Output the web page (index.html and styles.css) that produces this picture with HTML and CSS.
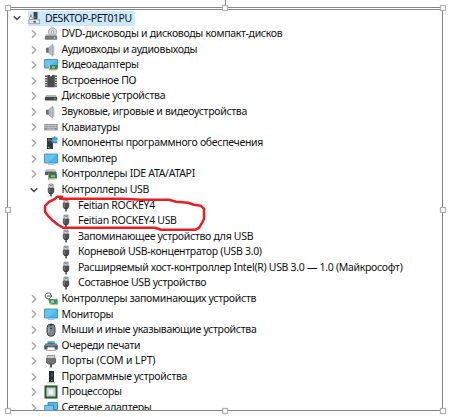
FILE: index.html
```html
<!DOCTYPE html>
<html lang="ru">
<head>
<meta charset="utf-8">
<title>Диспетчер устройств</title>
<link rel="stylesheet" href="styles.css">
</head>
<body>
<svg class="defs" width="0" height="0">
  <symbol id="closed" viewBox="0 0 8 10"><path d="M2 1.3 5.7 5 2 8.7" fill="none" stroke="#a2a2a2" stroke-width="1.3"/></symbol>
  <symbol id="open" viewBox="0 0 8 10"><path d="M.7 3.2 4 6.5 7.3 3.2" fill="none" stroke="#404040" stroke-width="1.4"/></symbol>
  <symbol id="pc" viewBox="0 0 14 14"><path d="M5.5 1h4v7h-4z" fill="#3f4548"/><path d="M6.5 6.3h1" stroke="#6be091"/><path d="M2.5 3.5h1v3h-1z" fill="#555"/><path d="M1.5 6h2.6v3H1.5z" fill="#fff" stroke="#777" stroke-width=".6"/><path d="M1 8.7h10.5v4H1z" fill="#e6e8e9" stroke="#8b8f92" stroke-width=".8"/><path d="M5.5 10.8h2.3" stroke="#333" stroke-width="1.4"/></symbol>
  <symbol id="dvd" viewBox="0 0 14 14"><circle cx="8.5" cy="5" r="4.2" fill="#d5d5d5" stroke="#999" stroke-width=".7"/><circle cx="8.5" cy="5" r="1.2" fill="#fff" stroke="#888" stroke-width=".6"/><path d="m2 7.5-1.2 2h12.4L12 7.5z" fill="#aaa"/><rect x=".8" y="9" width="12.4" height="3.7" rx=".7" fill="#777"/><path d="M9.5 11h2" stroke="#d5ded6"/></symbol>
  <symbol id="audio" viewBox="0 0 14 14"><path d="M2 4.7h3v5H2z" fill="#69727a"/><path d="m4.7 4.7 4-3.5v12l-4-3.5z" fill="#b5bbc0" stroke="#858c92" stroke-width=".6"/><path d="M9.8 2.5v9.5" stroke="#a4aaaf" stroke-width="1"/></symbol>
  <symbol id="screen" viewBox="0 0 14 14"><path d="M.5 2h13v9H.5z" fill="#49b5ea" stroke="#2687bc" stroke-width=".8"/><path d="M1 2.4h12L4 10.5H1z" fill="#76cdf5" opacity=".65"/><path d="M4 12.3h6" stroke="#8fb2c4"/></symbol>
  <symbol id="card" viewBox="0 0 14 14"><path d="M6 7h7.5v4.6H6z" fill="#2f8554"/><path d="M7 12h5" stroke="#d6b94f"/><path d="M8 8.3h3v2H8z" fill="#b0b979"/><path d="M5.5 6.3v6.7" stroke="#bbb"/></symbol>
  <symbol id="video" viewBox="0 0 14 14"><path d="M.5 1.5h13v8.5H.5z" fill="#49b5ea" stroke="#2687bc" stroke-width=".8"/><path d="M1 2h12L4 9.6H1z" fill="#76cdf5" opacity=".65"/><use href="#card"/></symbol>
  <symbol id="chip" viewBox="0 0 14 14"><path d="M3.2 1h7.6v12.3H3.2z" fill="#4b4b4b"/><path d="M2 1.5v12M12 1.5v12" stroke="#333" stroke-width="1.7" stroke-dasharray="1.5 1"/><path d="M6 1h2v1.3H6z" fill="#fff"/></symbol>
  <symbol id="disk" viewBox="0 0 14 14"><path d="m2 6-1 2.5h12L12 6z" fill="#b4b4b4"/><rect x=".8" y="8" width="12.4" height="3.5" rx=".7" fill="#484848"/><path d="M10 9.8h1.6" stroke="#55d984"/></symbol>
  <symbol id="keyboard" viewBox="0 0 14 14"><path d="M.3 4h13.4v6.4H.3z" fill="#8b8f91"/><path d="M1.2 5.4h11.6M1.2 7.2h11.6" stroke="#e6e6e6" stroke-width="1" stroke-dasharray="1 .4"/><path d="M3 9.1h8" stroke="#e6e6e6" stroke-width=".8"/></symbol>
  <symbol id="component" viewBox="0 0 14 14"><path d="M3 2h6v11H3z" fill="#30383b"/><path d="M4 4h3" stroke="#89949a"/><path d="M4 11.5h1.5" stroke="#5de090"/><path d="M8 1.5h2V.5h1.5v1h2V4h-1v1.5h1v1.7H8V5.5H7V4h1z" fill="#3289c4"/><path d="M8 4.3h5M10.8 2v4.5" stroke="#93d2ef" stroke-width=".6"/></symbol>
  <symbol id="ide" viewBox="0 0 14 14"><path d="m2 2-1 3h11l-1-3z" fill="#c5c5c5"/><path d="M1 4.6h11.5v3.5H1z" fill="#5b5b5b"/><path d="M5 7h8v4.5H5z" fill="#26834a"/><path d="M7 8.2h4v2H7z" fill="#91b395"/><path d="M6 12h5" stroke="#c7ad49"/><path d="M4.6 6.3v7" stroke="#999"/></symbol>
  <symbol id="usb" viewBox="0 0 14 14"><path d="M5 1.2h4v4H5z" fill="#eee" stroke="#666" stroke-width=".8"/><path d="M6 2.7h.7m.7 0h.7" stroke="#333"/><path d="M3.8 4.8h6.4v4.3L8.8 11H5.2L3.8 9.1z" fill="#505050"/><path d="M5.2 5.4v3.5" stroke="#888"/><path d="M7 10v3.5" stroke="#333" stroke-width="1.4"/></symbol>
  <symbol id="storage" viewBox="0 0 14 14"><path d="M7.5 2.1C5-.2 1 1.4 1.2 4s3 3.5 4.8 2.2M3.5 4h4M6 2.3 8 4 6 5.5" fill="none" stroke="#555" stroke-width="1"/><path d="m4 6.5 9.5 1v5l-8-1z" fill="#3d9760"/><path d="m7 8.5 3 .3v2l-3-.3z" fill="#bdd4bc"/><path d="m5.5 12 6 .8" stroke="#c7ad49"/><path d="M12.8 6.5v6" stroke="#777"/></symbol>
  <symbol id="mouse" viewBox="0 0 14 14"><rect x="3" y="1" width="8" height="12.3" rx="3.9" fill="#7d8790" stroke="#3d454b"/><path d="M7 1v5" stroke="#252b30" stroke-width="1.6"/><path d="M7 2.8v2" stroke="#8ed1f6"/><path d="M4.8 4.5v5" stroke="#b6bdc4"/></symbol>
  <symbol id="printer" viewBox="0 0 14 14"><path d="M3.5 2.4h7v3h-7z" fill="#269ae0"/><path d="M7 2.4h3.5v2H7z" fill="#2fc4a4"/><path d="M1.5 4.5h11l1.2 2v4H.3v-4z" fill="#494f53"/><path d="M1.2 6h11.6" stroke="#aeb4b7"/><path d="M3.5 8h7l1 3.5h-9z" fill="#f5f5f5" stroke="#888" stroke-width=".7"/></symbol>
  <symbol id="port" viewBox="0 0 14 14"><path d="M3.2 1.5h7.6v3H3.2z" fill="#ccc" stroke="#777" stroke-width=".7"/><path d="M2 4.2h10v4L10 10.5H4L2 8.2z" fill="#666"/><path d="M3 6h8M3 8h8" stroke="#999" stroke-width=".6"/><path d="M7 10v3.5" stroke="#555" stroke-width="2"/></symbol>
  <symbol id="software" viewBox="0 0 14 14"><path d="M5 1h5v11H5z" fill="#252b2e"/><path d="M8 3v4" stroke="#606c72"/><path d="M7 10.4h1.5" stroke="#69e697"/><path d="M3.3 12.8h8" stroke="#b5b5b5"/></symbol>
  <symbol id="cpu" viewBox="0 0 14 14"><path d="M1.5 1.5h11v11h-11z" fill="#cfdad1" stroke="#1f5a3a" stroke-width="1.9"/><path d="M4 4h6v6H4z" fill="#f3f4f2" stroke="#b9c4bb" stroke-width=".8"/><path d="M.5.5h13v13H.5z" fill="none" stroke="#918048" stroke-width=".6" stroke-dasharray="1 1"/></symbol>
  <symbol id="network" viewBox="0 0 14 14"><path d="M4 1.5h9.5v7H4z" fill="#56b9e9" stroke="#287da9" stroke-width=".8"/><path d="M.7 4.3h9v6.5h-9z" fill="#70c8ee" stroke="#287da9" stroke-width=".8"/><path d="M3 13h5" stroke="#999"/></symbol>
</svg>
<main class="frame">
  <ul class="tree">
    <li class="row root"><svg class="arrow"><use href="#open"/></svg><span class="selected"><svg class="icon"><use href="#pc"/></svg><span class="label">DESKTOP-PET01PU</span></span></li>
    <li class="row"><svg class="arrow"><use href="#closed"/></svg><svg class="icon"><use href="#dvd"/></svg><span class="label">DVD-дисководы и дисководы компакт-дисков</span></li>
    <li class="row"><svg class="arrow"><use href="#closed"/></svg><svg class="icon"><use href="#audio"/></svg><span class="label">Аудиовходы и аудиовыходы</span></li>
    <li class="row"><svg class="arrow"><use href="#closed"/></svg><svg class="icon"><use href="#video"/></svg><span class="label">Видеоадаптеры</span></li>
    <li class="row"><svg class="arrow"><use href="#closed"/></svg><svg class="icon"><use href="#chip"/></svg><span class="label">Встроенное ПО</span></li>
    <li class="row"><svg class="arrow"><use href="#closed"/></svg><svg class="icon"><use href="#disk"/></svg><span class="label">Дисковые устройства</span></li>
    <li class="row"><svg class="arrow"><use href="#closed"/></svg><svg class="icon"><use href="#audio"/></svg><span class="label">Звуковые, игровые и видеоустройства</span></li>
    <li class="row"><svg class="arrow"><use href="#closed"/></svg><svg class="icon"><use href="#keyboard"/></svg><span class="label">Клавиатуры</span></li>
    <li class="row"><svg class="arrow"><use href="#closed"/></svg><svg class="icon"><use href="#component"/></svg><span class="label">Компоненты программного обеспечения</span></li>
    <li class="row"><svg class="arrow"><use href="#closed"/></svg><svg class="icon"><use href="#screen"/></svg><span class="label">Компьютер</span></li>
    <li class="row"><svg class="arrow"><use href="#closed"/></svg><svg class="icon"><use href="#ide"/></svg><span class="label">Контроллеры IDE ATA/ATAPI</span></li>
    <li class="row"><svg class="arrow"><use href="#open"/></svg><svg class="icon"><use href="#usb"/></svg><span class="label">Контроллеры USB</span></li>
    <li class="row child"><svg class="icon"><use href="#usb"/></svg><span class="label">Feitian ROCKEY4</span></li>
    <li class="row child"><svg class="icon"><use href="#usb"/></svg><span class="label">Feitian ROCKEY4 USB</span></li>
    <li class="row child"><svg class="icon"><use href="#usb"/></svg><span class="label">Запоминающее устройство для USB</span></li>
    <li class="row child"><svg class="icon"><use href="#usb"/></svg><span class="label">Корневой USB-концентратор (USB 3.0)</span></li>
    <li class="row child"><svg class="icon"><use href="#usb"/></svg><span class="label">Расширяемый хост-контроллер Intel(R) USB 3.0 — 1.0 (Майкрософт)</span></li>
    <li class="row child"><svg class="icon"><use href="#usb"/></svg><span class="label">Составное USB устройство</span></li>
    <li class="row"><svg class="arrow"><use href="#closed"/></svg><svg class="icon"><use href="#storage"/></svg><span class="label">Контроллеры запоминающих устройств</span></li>
    <li class="row"><svg class="arrow"><use href="#closed"/></svg><svg class="icon"><use href="#screen"/></svg><span class="label">Мониторы</span></li>
    <li class="row"><svg class="arrow"><use href="#closed"/></svg><svg class="icon"><use href="#mouse"/></svg><span class="label">Мыши и иные указывающие устройства</span></li>
    <li class="row"><svg class="arrow"><use href="#closed"/></svg><svg class="icon"><use href="#printer"/></svg><span class="label">Очереди печати</span></li>
    <li class="row"><svg class="arrow"><use href="#closed"/></svg><svg class="icon"><use href="#port"/></svg><span class="label wide">Порты (COM и LPT)</span></li>
    <li class="row"><svg class="arrow"><use href="#closed"/></svg><svg class="icon"><use href="#software"/></svg><span class="label">Программные устройства</span></li>
    <li class="row"><svg class="arrow"><use href="#closed"/></svg><svg class="icon"><use href="#cpu"/></svg><span class="label">Процессоры</span></li>
    <li class="row"><svg class="arrow"><use href="#closed"/></svg><svg class="icon"><use href="#network"/></svg><span class="label">Сетевые адаптеры</span></li>
  </ul>
</main>
<svg class="overlay" viewBox="0 0 451 417">
  <g fill="none" stroke="#858585">
    <path d="M225.5 0v7M7.5 7.5h435M7.5 9.5h435"/>
    <path d="M7.5 9v402M442.5 9v402M7 410.5h436"/>
  </g>
  <g fill="#fff" stroke="#b0b0b0" stroke-width="1.2">
    <rect x="5.5" y="5.5" width="5" height="5"/><rect x="222.5" y="5.5" width="5" height="5"/><rect x="440.5" y="5.5" width="5" height="5"/>
    <rect x="5.5" y="207.5" width="5" height="5"/><rect x="440.5" y="207.5" width="5" height="5"/>
    <rect x="5.5" y="408.5" width="5" height="5"/><rect x="222.5" y="408.5" width="5" height="5"/><rect x="440.5" y="408.5" width="5" height="5"/>
  </g>
  <path d="M62 196.8h-5l-2 2-6 3-4 4v6l3 4 5 5 5 4 5 3h92l6 2h34l4-2 3-5 2-4v-10l-3-3-7-1-6-2-12-1-7-2h-28l-18-1H60" fill="none" stroke="#ed1c24" stroke-width="2.5" stroke-linejoin="round" stroke-linecap="round"/>
</svg>
</body>
</html>
```
FILE: styles.css
```css
body {
  margin: 0;
  width: 451px;
  height: 417px;
  overflow: hidden;
  position: relative;
  background: #fff;
  color: #111;
  font: 10.5px/15.58px "Noto Sans", "Open Sans", sans-serif;
}
.defs { position: absolute; }
.frame {
  box-sizing: border-box;
  height: 410px;
  padding: 10.6px 0 0 8px;
  overflow: hidden;
}
.tree {
  margin: 0;
  padding: 0;
  list-style: none;
}
.row {
  display: flex;
  align-items: center;
  height: 15.58px;
  padding-left: 21.5px;
  white-space: nowrap;
}
.root { padding-left: 5px; }
.child { padding-left: 51px; }
.arrow {
  width: 8px;
  height: 10px;
  margin-right: 6px;
  flex: none;
}
.icon {
  width: 14px;
  height: 14px;
  margin-right: 4px;
  flex: none;
}
.child .icon { margin-right: 5px; }
.row .label { letter-spacing: -0.3px; }
.row .wide { letter-spacing: -0.12px; }
.selected {
  display: flex;
  align-items: center;
  height: 14.5px;
  padding: 0 3px 0 0;
  background: #cce8ff;
}
.root .arrow { margin-right: 7px; }
.root .label {
  margin-left: -1px;
  letter-spacing: -0.45px;
}
.overlay {
  position: absolute;
  inset: 0;
  width: 451px;
  height: 417px;
}
```
